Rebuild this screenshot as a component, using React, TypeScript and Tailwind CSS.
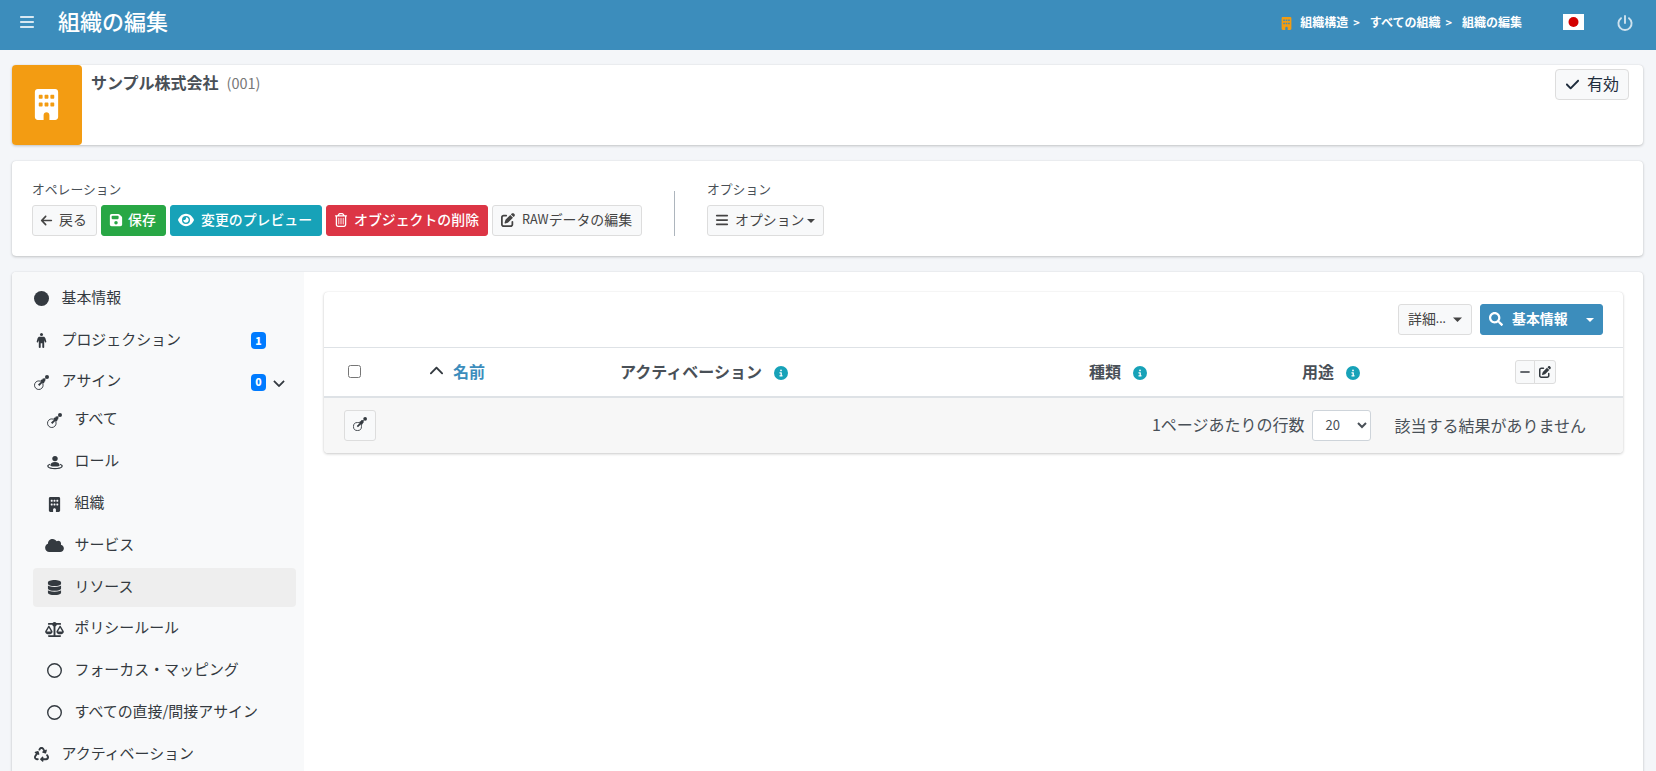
import type { ReactNode } from 'react';
import { FaSearch } from 'react-icons/fa';
import {
  FaArrowLeft, FaBars, FaBuilding, FaCheck, FaChevronDown, FaChevronUp, FaCircle,
  FaCircleInfo, FaCloud, FaDatabase, FaEye, FaFloppyDisk, FaMinus,
  FaPenToSquare, FaRecycle, FaRegCircle, FaRegTrashCan, FaScaleBalanced,
} from 'react-icons/fa6';

const AssignmentIcon = ({ className }: { className?: string }) => (
  <svg viewBox="0 0 15 15" className={className} fill="currentColor">
    <circle cx="4.8" cy="10.2" r="4.3" fill="none" stroke="currentColor" strokeWidth="0.95" />
    <path d="M4 9.6 7.3 6.500 6.500 5.600 7.700 4.500 8.500 4.600 8.700 3.600 11.600 3.300 11.200 6.300 10.500 6.500 10.500 7.300 9.300 8.500 8.500 7.700 5.300 11.100Z" />
    <circle cx="13" cy="2" r="2" />
  </svg>
);

const PersonIcon = ({ className }: { className?: string }) => (
  <svg viewBox="0 0 15 15" className={className} fill="currentColor">
    <circle cx="7.5" cy="1.5" r="1.5" />
    <path d="M5.6 3.800h3.800c1.100 0 1.600.6 2 1.500l.9 3.100c.2 1.100-1 1.400-1.400.5l-.7-1.700v7c0 1-1.900 1-1.900 0v-4h-1.600v4c0 1-1.900 1-1.900 0v-7l-.7 1.700c-.4.9-1.600.6-1.400-.5l.9-3.100c.4-.9.9-1.500 2-1.500Z" />
  </svg>
);

const RoleIcon = ({ className }: { className?: string }) => (
  <svg viewBox="0 0 16 16" className={className} fill="currentColor">
    <circle cx="8" cy="4.6" r="2.7" />
    <path d="M3.4 11.7C3.4 9 5 7.9 8 7.9s4.6 1.1 4.6 3.8c-2.4 1.2-6.8 1.2-9.2 0Z" />
    <path d="M3 10.2C-.8 11.5 .3 14.6 8 14.6s8.8-3.1 5-4.4" fill="none" stroke="currentColor" strokeWidth="1.2" />
  </svg>
);

const PowerIcon = ({ className }: { className?: string }) => (
  <svg viewBox="0 0 16 16" className={className} fill="none" stroke="currentColor" strokeWidth="1.9" strokeLinecap="round">
    <path d="M8 1v7M4 3.2a6.600 6.600 0 1 0 8 0" />
  </svg>
);

const Caret = ({ className }: { className?: string }) => (
  <svg viewBox="0 0 8 4" className={className} fill="currentColor">
    <path d="M0 0h8L4 4Z" />
  </svg>
);

interface MenuItem {
  label: string;
  icon: ReactNode;
  sub?: boolean;
  active?: boolean;
  badge?: string;
  open?: boolean;
}

const menu: MenuItem[] = [
  { label: '基本情報', icon: <FaCircle className="mb-px size-[15px]" /> },
  { label: 'プロジェクション', icon: <PersonIcon className="size-[15px]" />, badge: '1' },
  { label: 'アサイン', icon: <AssignmentIcon className="size-[15px]" />, badge: '0', open: true },
  { label: 'すべて', icon: <AssignmentIcon className="size-[15px]" />, sub: true },
  { label: 'ロール', icon: <RoleIcon className="size-4" />, sub: true },
  { label: '組織', icon: <FaBuilding className="size-[15px]" />, sub: true },
  { label: 'サービス', icon: <FaCloud className="h-[15px] w-[19px]" />, sub: true },
  { label: 'リソース', icon: <FaDatabase className="size-[15px]" />, sub: true, active: true },
  { label: 'ポリシールール', icon: <FaScaleBalanced className="h-[15px] w-[19px]" />, sub: true },
  { label: 'フォーカス・マッピング', icon: <FaRegCircle className="mb-px size-[15px]" />, sub: true },
  { label: 'すべての直接/間接アサイン', icon: <FaRegCircle className="mb-px size-[15px]" />, sub: true },
  { label: 'アクティベーション', icon: <FaRecycle className="size-[15px]" /> },
];

function SideItem({ item }: { item: MenuItem }) {
  const height = item.open ? 'h-[38px]' : 'h-[39px] mb-[2.8px]';
  return (
    <div className={`flex shrink-0 items-center rounded pr-2 ${height} ${item.active ? 'bg-[#eeeeee]' : ''}`}>
      <span className={`flex w-5 shrink-0 justify-center pt-px ${item.sub ? 'ml-[11.5px]' : '-ml-[1.5px]'}`}>{item.icon}</span>
      <span className="-mt-[3px] ml-2.5 flex-1 whitespace-nowrap text-[14.95px]">{item.label}</span>
      {item.badge && (
        <span className={`flex h-[17px] w-[15px] items-center justify-center rounded bg-[#007bff] text-[10.5px] font-black leading-none text-white ${item.open ? 'mt-px' : 'mr-[22px] mt-px'}`}>
          {item.badge}
        </span>
      )}
      {item.open && <FaChevronDown className="ml-[7px] mr-[3px] mt-0.5 size-3 stroke-[20] stroke-current" />}
    </div>
  );
}

interface ButtonProps {
  className: string;
  children: ReactNode;
}

const Button = ({ className, children }: ButtonProps) => (
  <button className={`flex h-[31px] items-center whitespace-nowrap rounded-[3px] border pb-[3px] text-[13.9px] ${className}`}>
    {children}
  </button>
);

const light = 'border-[#dddddd] bg-[#f8f9fa] text-[#444444]';
const card = 'rounded bg-white shadow-[0_0_1px_rgba(0,0,0,.125),0_1px_3px_rgba(0,0,0,.2)]';

const Info = () => <FaCircleInfo className="ml-3 mt-[3px] size-3.5 text-[#17a2b8]" />;

export default function App() {
  return (
    <div className="flex h-[771px] flex-col overflow-hidden bg-[#f4f6f9] font-['Noto_Sans_CJK_JP',sans-serif] text-[#495057]">
      <header className="flex h-[50px] shrink-0 items-center bg-[#3c8dbc] pb-1.5 pl-[19px] pr-[23px] text-white">
        <FaBars className="size-4 text-white/80" />
        <h1 className="ml-[23px] flex-1 pb-1 text-[22px] font-medium leading-none">組織の編集</h1>
        <nav className="flex items-center text-xs font-bold">
          <FaBuilding className="mr-[7px] mt-0.5 size-[13px] text-[#f39c12]" />
          <span>組織構造</span>
          <span className="ml-[5px] mr-2.5 text-[11px]">&gt;</span>
          <span>すべての組織</span>
          <span className="ml-[5px] mr-2.5 text-[11px]">&gt;</span>
          <span>組織の編集</span>
        </nav>
        <svg viewBox="0 0 21 16" className="ml-[41px] h-4 w-[21px]">
          <rect width="21" height="16" fill="#fff" />
          <circle cx="10.5" cy="8" r="5" fill="#d30000" />
        </svg>
        <PowerIcon className="ml-[33px] mt-0.5 size-4 text-white/75" />
      </header>

      <div className="flex flex-1 flex-col gap-4 pl-3 pr-[13px] pt-[15px]">
        <section className={`flex h-20 shrink-0 ${card}`}>
          <div className="flex w-[70px] items-center justify-center rounded bg-[#f39c12]">
            <FaBuilding className="mb-px mr-0.5 size-[31px] text-white" />
          </div>
          <div className="flex flex-1 items-baseline pl-[9px] pt-[5px] leading-6">
            <span className="font-bold">サンプル株式会社</span>
            <span className="ml-2 text-[14.5px] text-[#777777]">(001)</span>
          </div>
          <button className="mr-3.5 mt-1 flex h-[31px] items-center rounded border border-[#dddddd] bg-[#f8f9fa] px-[9px] pb-[3px] text-base text-[#1f2d3d]">
            <FaCheck className="mr-[7px] mt-0.5 size-[15px]" />
            有効
          </button>
        </section>

        <section className={`flex h-[95px] shrink-0 items-start px-5 pt-[18px] ${card}`}>
          <div>
            <div className="mb-[7px] text-[12.8px] leading-[19px]">オペレーション</div>
            <div className="flex gap-1">
              <Button className={`w-[65px] px-[7px] ${light}`}><FaArrowLeft className="mr-1.5 mt-0.5 size-[13px]" />戻る</Button>
              <Button className="w-[65px] border-[#28a745] bg-[#28a745] px-[7px] font-medium text-white"><FaFloppyDisk className="mr-[5px] mt-0.5 size-3.5" />保存</Button>
              <Button className="w-[152px] border-[#17a2b8] bg-[#17a2b8] px-[7px] font-medium text-white"><FaEye className="mr-[7px] mt-0.5 size-4 shrink-0" />変更のプレビュー</Button>
              <Button className="w-[162px] border-[#dc3545] bg-[#dc3545] px-[7px] font-medium text-white"><FaRegTrashCan className="mr-1.5 mt-0.5 size-3.5" />オブジェクトの削除</Button>
              <Button className={`w-[150px] px-2 ${light}`}><FaPenToSquare className="mr-[7px] mt-0.5 size-3.5" /><span className="pt-px text-[12.6px]">RAW</span>データの編集</Button>
            </div>
          </div>
          <div className="ml-8 mt-3 h-[45px] w-px bg-[#adb5bd]" />
          <div className="ml-8">
            <div className="mb-[7px] text-[12.8px] leading-[19px]">オプション</div>
            <Button className={`w-[117px] px-[7px] ${light}`}><FaBars className="mr-1.5 mt-0.5 size-3.5" />オプション<Caret className="ml-[3px] mt-[3px] h-1 w-2 shrink-0" /></Button>
          </div>
        </section>

        <section className={`flex flex-1 items-stretch overflow-hidden ${card}`}>
          <aside className="flex w-[292px] flex-col bg-[#f8f9fa] pl-[21px] pr-2 pt-[7px] text-[#343a40]">
            {menu.map((item) => <SideItem key={item.label} item={item} />)}
          </aside>

          <main className="flex-1 p-5">
            <div className={`overflow-hidden ${card}`}>
              <div className="flex h-[55px] items-center justify-end gap-2 px-5">
                <Button className={`w-[74px] pl-[9px] ${light}`}>詳細<span className="text-xs">...</span><Caret className="ml-[7px] mt-1 h-[5.5px] w-[9px] shrink-0" /></Button>
                <Button className="w-[123px] border-[#3c8dbc] bg-[#3c8dbc] pl-2 font-bold text-white">
                  <FaSearch className="mr-[9px] mt-px size-3.5" />基本情報<Caret className="ml-[18px] mt-1 h-1 w-2 shrink-0" />
                </Button>
              </div>
              <div className="grid h-[51px] grid-cols-[104px_192px_469px_213px_213px_1fr] items-center border-b-2 border-t border-b-[#dee2e6] border-t-[#dee2e6] font-bold">
                <input type="checkbox" className="mb-0.5 ml-6 size-[13px]" />
                <span className="flex items-center pb-0.5 text-[#3c8dbc]"><FaChevronUp className="ml-px mr-[9px] size-[15px] text-[#343a40]" />名前</span>
                <span className="flex items-center pb-0.5">アクティベーション<Info /></span>
                <span className="flex items-center pb-0.5">種類<Info /></span>
                <span className="flex items-center pb-0.5">用途<Info /></span>
                <div className="flex text-[#343a40]">
                  <button className="flex h-6 w-5 items-center justify-center rounded-l-[3px] border border-[#dddddd] bg-[#f8f9fa]"><FaMinus className="size-3" /></button>
                  <button className="-ml-px flex h-6 w-[22px] items-center justify-center rounded-r-[3px] border border-[#dddddd] bg-[#f8f9fa]"><FaPenToSquare className="size-3" /></button>
                </div>
              </div>
              <div className="flex h-[55px] items-center bg-[#f7f7f7] pl-5 pr-[37px]">
                <button className="flex h-[31px] w-8 items-center justify-center rounded-[3px] border border-[#dddddd] bg-[#f8f9fa] pb-[3px] text-[#343a40]">
                  <AssignmentIcon className="size-3.5" />
                </button>
                <span className="ml-auto pb-[3px]">1ページあたりの行数</span>
                <select className="ml-2 h-[31px] w-[59px] rounded-[3px] border border-[#ced4da] bg-white pb-0.5 pl-2 text-[13px]">
                  <option>20</option>
                </select>
                <span className="ml-[23px] pb-0.5">該当する結果がありません</span>
              </div>
            </div>
          </main>
        </section>
      </div>
    </div>
  );
}
